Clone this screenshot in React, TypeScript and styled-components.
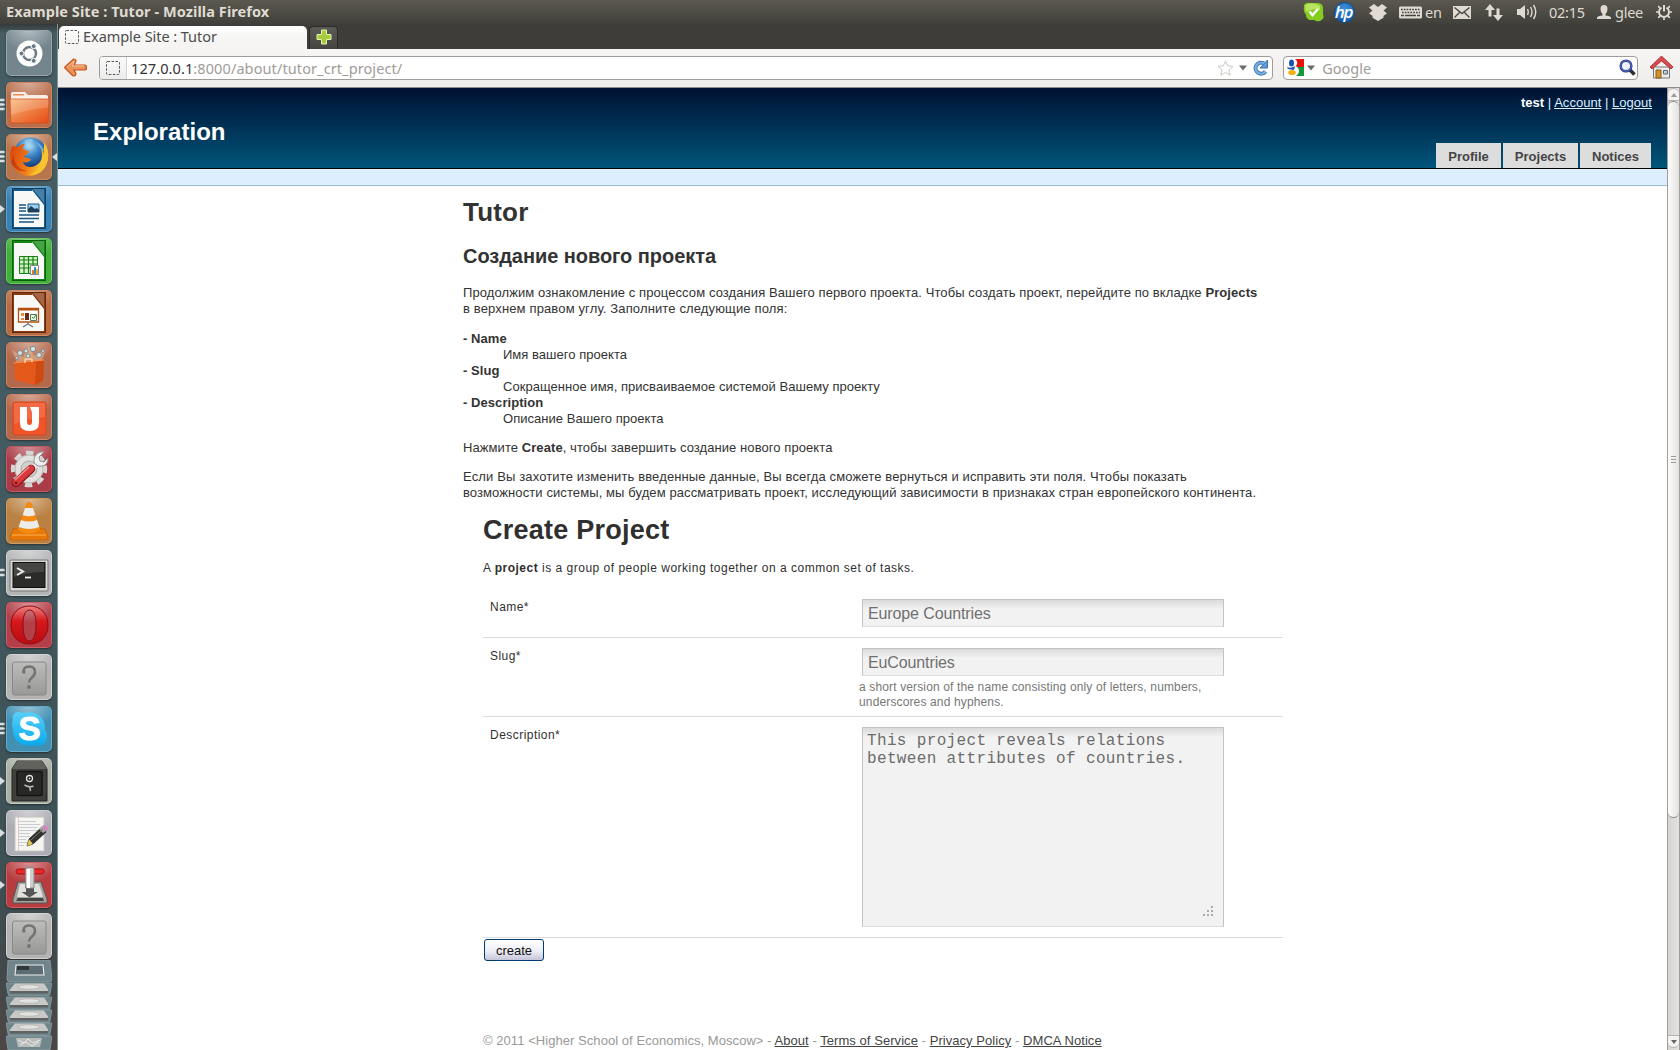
import React from "react";
import styled, { createGlobalStyle } from "styled-components";

const ui = '"Noto Sans", "Open Sans", sans-serif';
const sans = '"Liberation Sans", Arial, sans-serif';

const Global = createGlobalStyle`
  * { box-sizing: border-box; }
  body { margin: 0; background: #fff; overflow: hidden; }
  svg { display: block; flex: none; }
`;

const Screen = styled.div`
  width: 1680px; height: 1050px; display: flex; flex-direction: column;
  font-family: ${sans}; overflow: hidden;
`;
const Panel = styled.header`
  height: 24px; flex: none; display: flex; align-items: center; justify-content: space-between;
  padding: 0 8px 0 6px; background: linear-gradient(#5b594f, #403f3a);
  color: #dfdbd2; font-family: ${ui}; font-size: 14.5px;
`;
const WindowTitle = styled.span`
  font-weight: 700; font-size: 14.5px; letter-spacing: 0.08px; white-space: nowrap; line-height: 23px; height: 24px;
`;
const Tray = styled.div`display: flex; align-items: center; height: 24px;`;
const TrayItem = styled.span<{ $w: number; $gap?: number }>`
  width: ${p => p.$w}px; margin-left: ${p => p.$gap ?? 0}px; white-space: nowrap; line-height: 22px;
  display: flex; justify-content: flex-start; letter-spacing: -0.25px;
`;
const Desktop = styled.div`display: flex; flex: 1; min-height: 0;`;

const Launcher = styled.nav`
  width: 58px; flex: none; padding: 6px 0 0 0; display: flex; flex-direction: column;
  border-right: 1px solid #7d9795;
  background: linear-gradient(#34393a 0, #465d63 9px, #435a60 45%, #3d5156 80%, #43494a 92%, #4c4645 100%);
`;
const Slot = styled.div<{ $h: number }>`
  height: ${p => p.$h}px; flex: none; display: flex; align-items: flex-start;
`;
const Pips = styled.div`width: 6px; height: 46px; display: flex; align-items: center;`;
const ActiveMark = styled.div`width: 5px; height: 46px; display: flex; align-items: center;`;
const Tile = styled.div<{ $c: string; $edge: string }>`
  width: 46px; height: 46px; border-radius: 5px;
  background: radial-gradient(ellipse 60% 45% at 50% 0, rgba(255,255,255,.45), rgba(255,255,255,0)), ${p => p.$c};
  box-shadow: inset 0 0 0 1px ${p => p.$edge}, 0 1px 2px rgba(0,0,0,.45);
`;
const Stack = styled.div`height: 90px; padding-left: 6px;`;

const Browser = styled.main`flex: 1; min-width: 0; display: flex; flex-direction: column;`;
const TabStrip = styled.div`
  height: 25px; flex: none; display: flex; align-items: flex-end; gap: 2px; padding-left: 1px; background: #3e3d39;
`;
const Tab = styled.div`
  width: 248px; height: 23px; display: flex; align-items: center; gap: 4px; padding: 0 0 2px 6px;
  border-radius: 5px 5px 0 0; background: linear-gradient(#fff, #f6f5f4 60%);
  font: 14.5px/21px ${ui}; letter-spacing: -0.05px; color: #4c4c4c;
`;
const NewTab = styled.div`
  width: 29px; height: 23px; display: flex; align-items: center; justify-content: center; padding-bottom: 2px;
  border: 1px solid #2c2b28; border-bottom: 0; border-radius: 4px 4px 0 0; background: linear-gradient(#5c5a55, #45443f);
`;
const Toolbar = styled.div`
  height: 39px; flex: none; display: flex; align-items: center; padding: 0 7px 1px 6px;
  background: linear-gradient(#f6f5f4, #eeedeb); border-bottom: 1px solid #8f8d8a;
`;
const Field = styled.div<{ $w: number; $ml: number }>`
  width: ${p => p.$w}px; margin-left: ${p => p.$ml}px; height: 24px; display: flex; align-items: center;
  border: 1px solid #a09d99; border-radius: 4px; background: #fff; overflow: hidden;
  font: 14.5px/22px ${ui}; color: #a09c98;
`;
const SiteId = styled.div`
  width: 27px; height: 22px; display: flex; align-items: center; justify-content: center;
  background: linear-gradient(#fafafa, #ececec); border-right: 1px solid #d4d2cf;
`;
const Url = styled.span`flex: 1; padding-left: 4px; letter-spacing: 0.1px; b { font-weight: 400; color: #333; }`;
const Placeholder = styled.span`flex: 1; padding-left: 7px;`;

const View = styled.div`flex: 1; min-height: 0; display: flex;`;
const Page = styled.div`width: 1609px; flex: none; display: flex; flex-direction: column; background: #fff; color: #333; overflow: hidden;`;
const SiteHeader = styled.div`
  height: 81px; flex: none; display: flex; justify-content: space-between; padding: 0 15px 0 35px;
  background: linear-gradient(#001133, #00557a); border-bottom: 1px solid #000;
`;
const SiteName = styled.div`padding-top: 30px; font: 700 24px/28px ${sans}; letter-spacing: 0.05px; color: #fff;`;
const HeaderSide = styled.div`display: flex; flex-direction: column; justify-content: space-between; align-items: flex-end;`;
const UserLinks = styled.div`
  padding-top: 7px; font-size: 13px; line-height: 16px; color: #def; letter-spacing: 0.03px;
  b { color: #fff; } a { text-decoration: underline; }
`;
const SiteTabs = styled.div`display: flex; gap: 2px; padding-right: 1px;`;
const SiteTab = styled.a<{ $w: number }>`
  width: ${p => p.$w}px; height: 25px; background: #ddd; color: #444; text-align: center; font: 700 13px/27px ${sans};
`;
const SubBar = styled.div`height: 17px; flex: none; background: #def; border-bottom: 1px solid #9bc;`;
const Article = styled.article`margin-left: 405px; width: 800px; font-size: 13px; line-height: 16px;`;
const H1 = styled.h1`margin: 11px 0 0; font-size: 26px; line-height: 30px; letter-spacing: 0.2px;`;
const H2 = styled.h2`margin: 17px 0 0; font-size: 20px; line-height: 24px; letter-spacing: -0.05px;`;
const P = styled.p<{ $top: number }>`margin: ${p => p.$top}px 0 0; white-space: nowrap;`;
const Line = styled.span<{ $ls: number }>`display: block; letter-spacing: ${p => p.$ls}px;`;
const Dl = styled.dl`margin: 14px 0 0; dt { font-weight: 700; letter-spacing: 0.06px; } dd { margin: 0 0 0 40px; letter-spacing: 0.03px; }`;

const Form = styled.form`margin: 0 0 0 425px; width: 800px; font-size: 12px; color: #2f2f2f;`;
const FormTitle = styled.h1`margin: 13px 0 0; font-size: 27px; line-height: 32px; letter-spacing: 0.24px;`;
const Lead = styled.p`margin: 14px 0 13px; font-size: 12px; line-height: 16px; letter-spacing: 0.5px; white-space: nowrap;`;
const Row = styled.div<{ $h: number }>`
  height: ${p => p.$h}px; display: flex; border-bottom: 1px solid #dcdcdc; padding: 10px 0 0 7px;
`;
const Label = styled.label`width: 370px; line-height: 16px; letter-spacing: 0.46px;`;
const Cell = styled.div`position: relative; padding-left: 2px; width: 370px;`;
const Input = styled.input`
  display: block; width: 362px; height: 28px; padding: 1px 5px 0; outline: 0;
  border: 1px solid #c3c3c3; border-bottom-color: #ddd; border-radius: 0;
  background: linear-gradient(#dadada, #f2f2f2 9px); color: #707070; font: 16px ${sans}; letter-spacing: -0.12px;
`;
const Textarea = styled.textarea`
  display: block; width: 362px; height: 200px; padding: 4px 4px; outline: 0; resize: none; overflow: hidden;
  border: 1px solid #c3c3c3; border-bottom-color: #ddd; border-radius: 0;
  background: linear-gradient(#dadada, #f2f2f2 9px); color: #6c6c6c;
  font: 16px/18px "Liberation Mono", monospace; letter-spacing: 0.35px;
`;
const Help = styled.div`margin: 4px 0 0 -3px; font-size: 12px; line-height: 15px; color: #777; letter-spacing: 0.14px; white-space: nowrap;`;
const Grip = styled.svg`position: absolute; left: 343px; bottom: 20px;`;
const Submit = styled.button`
  display: block; margin: 1px 0 0 1px; width: 60px; height: 22px; padding: 0; border: 1px solid #003c74; border-radius: 3px;
  background: linear-gradient(#fff, #eeeef6 55%, #c6c5d9); font: 13px ${sans}; color: #111;
`;
const Footer = styled.footer`
  margin: 72px 0 0 425px; font-size: 13px; line-height: 16px; color: #999; white-space: nowrap; letter-spacing: 0.055px;
  a { color: #444; text-decoration: underline; }
`;
const ScrollBar = styled.div`
  width: 13px; height: 100%; display: flex; flex-direction: column; background: linear-gradient(90deg, #d8d4d0, #e3e2e0);
  border: solid #a09d9a; border-width: 0 1px; padding-bottom: 2px;
`;
const ScrollEnd = styled.div<{ $bottom?: boolean }>`
  height: 13px; flex: none; display: flex; align-items: center; justify-content: center; background: #f3f2f1;
  border: 1px solid #b5b2ae; border-radius: ${p => (p.$bottom ? "0 0 6px 6px" : "6px 6px 0 0")}; border-left: 0; border-right: 0;
`;
const Thumb = styled.div`
  height: 717px; flex: none; display: flex; align-items: center; justify-content: center;
  border: solid #8f8c88; border-width: 1px 0; border-radius: 6px; background: linear-gradient(90deg, #fdfdfc, #e3e1de);
`;
const Spacer = styled.div`flex: 1;`;

const DashedPage = () => (
  <svg width="14" height="14" viewBox="0 0 14 14"><rect x=".5" y=".5" width="13" height="13" rx="1" fill="none" stroke="#555" strokeDasharray="2.5 1.5" /></svg>
);
const Caret = () => <svg width="8" height="6" viewBox="0 0 8 6"><path d="M0 .5h8L4 5.5z" fill="#6d6b68" /></svg>;

const Files = () => (
  <svg width="46" height="46" viewBox="0 0 46 46">
    <defs><linearGradient id="fold" x1="0" y1="0" x2="1" y2="1"><stop offset="0" stopColor="#f6bd83" /><stop offset=".5" stopColor="#ee7f43" /><stop offset="1" stopColor="#e64a16" /></linearGradient></defs>
    <path d="M5 12q0-2 2-2h12l3 3h18q2 0 2 2v4H5z" fill="#f8eee8" /><path d="M7 12h11v1.500H7z" fill="#f08a54" />
    <path d="M4 17h39l-1 24H5z" fill="url(#fold)" stroke="#dd4a14" strokeWidth=".7" />
    <path d="M4.500 17.500h38l-.4 8Q22 27 5 33z" fill="#fff" opacity=".16" />
  </svg>
);
const Firefox = () => (
  <svg width="46" height="46" viewBox="0 0 46 46">
    <defs>
      <radialGradient id="globe" cx=".45" cy=".25" r=".7"><stop offset="0" stopColor="#b4e0f6" /><stop offset=".45" stopColor="#3c86c8" /><stop offset="1" stopColor="#0d2d6c" /></radialGradient>
      <linearGradient id="fox" x1="0" y1="0" x2="1" y2=".3"><stop offset="0" stopColor="#d9420b" /><stop offset=".6" stopColor="#f07c16" /><stop offset="1" stopColor="#fcd438" /></linearGradient>
    </defs>
    <circle cx="24.500" cy="20" r="16.500" fill="url(#globe)" />
    <path d="M19 6q5-2 8 0l-3 4 5 2-5 3-5-3zM30 8q7 3 9 10l-4-3z" fill="#9bd2ee" opacity=".55" />
    <path d="M6.500 12C2 20 4 32 12 38c9 7 22 4 27-5 4-7 4-14 1-20 0 4 0 6-2 9 0-4-1-6-3-8 2 7 1 13-3 16-6 5-14 3-15-2 3 1 5 0 8-2-2-3-5-2-7-3 0-2 4-2 5-6-2 0-4-1-6-2 0-3 1-4 2-5-4 0-5 1-7 3-2 0-3-1-5-1z" fill="url(#fox)" />
    <path d="M38 8c5 7 6 16 1 25-3 5-9 8-16 8 10-4 15-10 15-18z" fill="#f9c32e" />
    <path d="M8 20c-1 9 5 16 13 17-6 1-14-2-16-9z" fill="#b92c08" opacity=".6" />
  </svg>
);
const OfficeDoc = ({ c, children }: { c: string; children: React.ReactNode }) => (
  <svg width="46" height="46" viewBox="0 0 46 46">
    <path d="M6 2h34v41H6z" fill={c} /><path d="M6.500 2.500h33v40h-33z" fill="none" stroke="#000" strokeOpacity=".3" />
    <path d="M8 5h18l12 14v22H8z" fill="#f8f8f7" /><path d="M26 4v2L37 19v-1z" fill="#fff" />
    <path d="M27 3h11v14z" fill="#fff" opacity=".22" />{children}
  </svg>
);
const Writer = () => <OfficeDoc c="#145a8c"><path d="M13 19h7M13 22h7M13 25h7M13 29h20M13 32.500h20M13 36h15" stroke="#155684" strokeWidth="1.700" /><path d="M22 18h11v8H22z" fill="#9ad0ee" stroke="#155684" /><path d="M22 26v-3l3-3 4 3 2-1 2 2v2z" fill="#1d4159" /></OfficeDoc>;
const Calc = () => <OfficeDoc c="#128a12"><path d="M13.500 18.500h18v17h-18z" fill="#d5f1c7" stroke="#138013" /><path d="M13 22h19M13 26h19M13 30h19M18 18v18M22.500 18v18M27 18v18" stroke="#138013" strokeWidth="1.200" /><path d="M24.500 27.500h8v9h-8z" fill="#fff" stroke="#888" /><path d="M26 32h2v4h-2z" fill="#e8792c" /><path d="M28 29h2v7h-2z" fill="#318fd0" /><path d="M30 31h2v5h-2z" fill="#f0b62e" /></OfficeDoc>;
const Impress = () => <OfficeDoc c="#8c3a10"><path d="M12.500 18.500h20v13.500h-20z" fill="#fff" stroke="#b5500f" strokeWidth="1.300" /><path d="M12 18h21v2.500H12z" fill="#b5500f" /><path d="M15 23h3v3h-3zM15 28h3v2h-3z" fill="#e58845" /><path d="M19 23h4v7h-4z" fill="#6d2c10" /><path d="M24.500 24.500h6v6h-6z" fill="#eaf7e5" stroke="#547b58" /><path d="m26 27 1.500 1.500L30 25" fill="none" stroke="#20963a" /><path d="M22 32v2m0 0-5 3m5-3 5 3" fill="none" stroke="#777" strokeWidth="1.400" /></OfficeDoc>;
const Software = () => (
  <svg width="46" height="46" viewBox="0 0 46 46">
    <path d="M11 21 6 8l11 7L23 5l5 9L40 7l-5 14z" fill="#fbd5a4" opacity=".4" />
    {[[14, 11, 2.500], [20, 9, 2], [27, 7, 2.700], [33, 13, 2.500], [22, 14, 2], [37, 9, 1.500], [11, 16, 1.500]].map(([x, y, r]) => <circle key={x} cx={x} cy={y} r={r} fill="#dce1e3" stroke="#71858d" strokeWidth=".9" />)}
    <path d="M8 21q14-2 30-3l-1 21-8 4-20-5z" fill="#e4591a" /><path d="m30 20 8-2-1 21-8 4z" fill="#cf4a10" />
    <path d="M8 21q14-2 30-3" fill="none" stroke="#f99150" /><path d="M19 21v-3q0-1 1-1h5q1 0 1 1v2" fill="none" stroke="#ffd1a0" strokeWidth="1.500" />
  </svg>
);
const UbuntuOne = () => (
  <svg width="46" height="46" viewBox="0 0 46 46"><rect x="7" y="8" width="33" height="33" rx="2" fill="#f0552a" stroke="#d9461d" /><path d="M8 9h31v14Q22 24 8 30z" fill="#fff" opacity=".13" />
    <path d="M14 13h7v15q0 3 2.500 3t2.500-3V18l-2-5h9v16q0 8-9.500 8T14 29z" fill="#fff" /></svg>
);
const Settings = () => (
  <svg width="46" height="46" viewBox="0 0 46 46">
    <circle cx="23" cy="23" r="15.500" fill="none" stroke="#d5d5d3" strokeWidth="5.500" strokeDasharray="7 5.170" transform="rotate(-12 23 23)" />
    <circle cx="23" cy="23" r="14" fill="#e1e1df" stroke="#b9b9b7" /><circle cx="23" cy="23" r="8" fill="#cfcfcd" stroke="#aaa" />
    <path d="m31 18-7 7" stroke="#e8e8e8" strokeWidth="5" /><path d="M28 17c-1-7 4-12 10-11l-5 5 1 4 4 1 4-4c0 7-5 9-10 8z" fill="#ededeb" stroke="#909090" />
    <path d="M25 23 10 37" stroke="#8b1218" strokeWidth="8.500" strokeLinecap="round" /><path d="M25 22.500 10 36.500" stroke="#d6383b" strokeWidth="6.500" strokeLinecap="round" /><path d="M23 21 9 34" stroke="#f19b98" strokeWidth="1.200" /><circle cx="10" cy="37" r="1.300" fill="#701014" />
  </svg>
);
const Vlc = () => (
  <svg width="46" height="46" viewBox="0 0 46 46">
    <path d="M7 31h32l3 8q0 3-3 3H7q-3 0-3-3z" fill="#e87909" stroke="#c75e00" strokeWidth=".8" /><path d="M6 37h34" stroke="#ffb04c" />
    <path d="M20.500 5q2.500-2 5 0l9 27q-11 7-23 0z" fill="#f38a12" /><path d="M19 10h8l2.300 7q-6 2.500-12.600 0zM15 22q8 3 16 0l2.300 7q-10 4-20.600 0z" fill="#ececea" />
  </svg>
);
const Terminal = () => (
  <svg width="46" height="46" viewBox="0 0 46 46"><rect x="4" y="10" width="38" height="31" rx="1" fill="#d6d6d4" stroke="#777" /><rect x="7" y="12.500" width="32" height="25" fill="#2b2b2a" stroke="#111" /><path d="M8 13h30v9Q22 22 8 27z" fill="#fff" opacity=".13" /><path d="m11 18 6 3.500-6 3.500" fill="none" stroke="#eee" strokeWidth="2" /><path d="M19 27.500h6" stroke="#eee" strokeWidth="1.800" /></svg>
);
const Opera = () => (
  <svg width="46" height="46" viewBox="0 0 46 46"><defs><linearGradient id="op" x1="0" y1="0" x2="0" y2="1"><stop offset="0" stopColor="#ee8583" /><stop offset=".4" stopColor="#d5181c" /><stop offset="1" stopColor="#b80d12" /></linearGradient></defs>
    <path fillRule="evenodd" d="M23.500 4C35 4 42 12 42 23s-7 19-18.500 19S5 34 5 23 12 4 23.500 4zm0 4C19 8 17 14 17 23s2 16 6.500 16S30 32 30 23 28 8 23.500 8z" fill="url(#op)" stroke="#8f0c11" /></svg>
);
const Unknown = () => (
  <svg width="46" height="46" viewBox="0 0 46 46"><defs><linearGradient id="uk" x1="0" y1="0" x2="0" y2="1"><stop offset="0" stopColor="#bdbdbc" /><stop offset="1" stopColor="#989897" /></linearGradient></defs>
    <rect x="6.500" y="8" width="33.500" height="33" rx="2" fill="url(#uk)" stroke="#888887" />
    <path d="M17.500 18q0-5.500 5.500-5.500 6 0 6 5.500 0 3-3 5.500t-3 5" fill="none" stroke="#737372" strokeWidth="2.500" /><circle cx="17.800" cy="18" r="1.800" fill="#737372" /><circle cx="23" cy="33" r="1.900" fill="#737372" /></svg>
);
const SkypeGlyph = styled.span`
  width: 46px; height: 46px; display: flex; align-items: center; justify-content: center; position: relative;
  color: #fff; font: 700 33px/46px "Liberation Sans", Arial, sans-serif; -webkit-text-stroke: 1px #fff; padding-left: 1px;
  svg { position: absolute; inset: 0; } span { position: relative; }
`;
const Skype = () => <SkypeGlyph><svg width="46" height="46" viewBox="0 0 46 46"><defs><linearGradient id="sk" x1="0" y1="0" x2="0" y2="1"><stop offset="0" stopColor="#57d0f9" /><stop offset="1" stopColor="#0aa8ec" /></linearGradient></defs><path d="M7 14C5 8 11 4 17 7c12-3 23 4 22 17 6 9-2 19-11 15C17 42 6 35 7 23q-2-5 0-9z" fill="url(#sk)" /></svg><span>S</span></SkypeGlyph>;
const Safe = () => (
  <svg width="46" height="46" viewBox="0 0 46 46"><path d="M11 3h25l5 8v32H6V11z" fill="#3f3f3c" stroke="#222" /><path d="M11 3h25l5 8H6z" fill="#62625d" /><rect x="11" y="13.500" width="25" height="24" rx="1" fill="#282826" stroke="#141413" strokeWidth="1.500" /><circle cx="23.500" cy="20.500" r="3" fill="#111" stroke="#e5e5e0" strokeWidth="1.300" /><circle cx="23.500" cy="20.500" r="1" fill="#ddd" /><path d="M18.500 27q5 3 9 1m-4 0 1 5" stroke="#b5b5b0" strokeWidth="1.500" fill="none" /></svg>
);
const Editor = () => (
  <svg width="46" height="46" viewBox="0 0 46 46"><path d="M9 7h29v34H9z" fill="#f5f5f1" stroke="#c5c5c0" /><path d="M12 11.500h18M12 14.500h22M12 17.500h19M12 20.500h22M12 23.500h12M12 26.500h12M12 29.500h8M12 32.500h10M12 35.500h6" stroke="#c9ccd3" /><path d="M12.500 7v34" stroke="#efb3b3" strokeWidth=".7" />
    <path d="m21 36 2-7 13-12 4 5-13 12z" fill="#30302e" stroke="#151514" strokeWidth=".7" /><path d="m21 36 2-7 4 5z" fill="#e8c551" /><path d="m33 19 3-3 4 5-3 2z" fill="#a5a5a0" /><path d="m36 16 2-1q4 1 4 5l-2 1z" fill="#d980c8" /><path d="m25 30 12-11" stroke="#777" /></svg>
);
const Transmission = () => (
  <svg width="46" height="46" viewBox="0 0 46 46"><rect x="10" y="7" width="28" height="5" rx="2.500" fill="#eb292b" stroke="#a70d11" /><path d="M12 20h23l6 17v4H7v-4z" fill="#a4a4a1" stroke="#555" /><path d="M14 22h19l4 13H11z" fill="#e1e1dd" /><path d="M12 36h25l1 3H10z" fill="#444" />
    <path d="M20 30v-5h8v5h4l-8.500 5.500L15.500 30z" fill="#555" /><path d="M19.500 7q0-1.500 4.500-1.500T28 7v19h-8.500z" fill="#cfcfcc" stroke="#888" /><path d="M21 7h3v19h-3z" fill="#fff" /></svg>
);
const Dash = () => (
  <svg width="46" height="46" viewBox="0 0 46 46"><circle cx="23.500" cy="23.500" r="13" fill="#fff" /><circle cx="23.500" cy="23.500" r="6.500" fill="none" stroke="#6d7c84" strokeWidth="2.500" />
    {[[15.500, 23.500], [27.700, 16.200], [27.700, 30.800]].map(([x, y]) => <circle key={y} cx={x} cy={y} r="2.500" fill="#6d7c84" stroke="#fff" strokeWidth="1" />)}</svg>
);

type Entry = { c: string; edge: string; icon: React.ReactNode; pips?: "three" | "two" | "one"; active?: boolean; h?: number };
const entries: Entry[] = [
  { c: "#74868d", edge: "#98a6ab", icon: <Dash /> },
  { c: "#b96e4b", edge: "#cf8462", icon: <Files />, pips: "three" },
  { c: "#b8764e", edge: "#c98a60", icon: <Firefox />, pips: "three", active: true },
  { c: "#3981b2", edge: "#62a0cb", icon: <Writer />, pips: "one" },
  { c: "#43ae3b", edge: "#6dca61", icon: <Calc /> },
  { c: "#b76c43", edge: "#d28a64", icon: <Impress /> },
  { c: "#b2694c", edge: "#c9846a", icon: <Software /> },
  { c: "#b5674a", edge: "#cc866c", icon: <UbuntuOne /> },
  { c: "#aa3c47", edge: "#c25a63", icon: <Settings /> },
  { c: "#b98243", edge: "#d19b5e", icon: <Vlc /> },
  { c: "#b3b4b5", edge: "#d0d1d1", icon: <Terminal />, pips: "two" },
  { c: "#b33f48", edge: "#cb5d65", icon: <Opera /> },
  { c: "#b3b3b3", edge: "#d2d2d2", icon: <Unknown /> },
  { c: "#4291b4", edge: "#65aac9", icon: <Skype />, pips: "three" },
  { c: "#a8afa4", edge: "#c4cac0", icon: <Safe />, pips: "one" },
  { c: "#adadb5", edge: "#cacad0", icon: <Editor />, pips: "one" },
  { c: "#b73c3f", edge: "#d06062", icon: <Transmission />, pips: "one", h: 51 },
  { c: "#b3b3b3", edge: "#d2d2d2", icon: <Unknown />, h: 47 },
];

const PipMarks = ({ kind }: { kind?: Entry["pips"] }) => (
  <Pips>
    <svg width="6" height="14" viewBox="0 0 6 14" fill="#d9dedf">
      {kind === "three" && <path d="M0 1h3.500l1.500 1-1.500 1H0zM0 5.500h3.500l1.500 1-1.500 1H0zM0 10h3.500l1.500 1-1.500 1H0z" stroke="#d9dedf" strokeWidth=".5" />}
      {kind === "two" && <path d="M0 3h3.500l1.500 1-1.500 1H0zM0 8h3.500l1.500 1-1.500 1H0z" stroke="#d9dedf" strokeWidth=".5" />}
      {kind === "one" && <path d="M0 3v8l5-4z" />}
    </svg>
  </Pips>
);

const FoldedStack = () => (
  <svg width="46" height="90" viewBox="0 0 46 90">
    <path d="M2 0h42l2 19q0 3-3 3H4q-3 0-3-3z" fill="#6f848b" stroke="#8fa1a6" strokeWidth=".8" /><path d="M10 5h27l1 10H9z" fill="#5c6c73" stroke="#eee" strokeWidth="1.100" /><path d="M11 6h12v4H11z" fill="#30383b" />
    {[22, 36, 49, 62].map(y => (
      <g key={y} transform={`translate(0 ${y})`}><path d="M0 1h46l-2 11q0 2-2 2H4q-2 0-2-2z" fill="#70868d" stroke="#90a3a8" strokeWidth=".7" /><path d="M9 1.500h29l4 6v2H4v-2z" fill="#c9c9c7" /><path d="M4 9h38v2.500H4z" fill="#5f6263" /><ellipse cx="23" cy="5" rx="11" ry="2.200" fill="#e2e2e0" stroke="#aaa" strokeWidth=".6" /></g>
    ))}
    <path d="M0 76h46l-2 14H2z" fill="#71878e" stroke="#90a3a8" strokeWidth=".7" /><path d="M10 78h26l-2 9H12z" fill="#b8bdbb" /><path d="m12 80 6 3 4-4 5 4 7-3M14 85l6-3 6 4 7-4" stroke="#e8eae7" fill="none" />
  </svg>
);

const SkypeTray = () => <svg width="21" height="20" viewBox="0 0 21 20"><path d="M1 5C0 2 4 0 7 1h9q4 1 4 5v6q2 5-3 7-3 1-6-1H7q-4-1-4-5Q0 9 1 5z" fill="#86cb20" /><path d="M2 3q8-4 15 1v4Q9 6 3 10z" fill="#d0ef80" opacity=".7" /><path d="m6.500 9.500 3 3.500 5.500-6" fill="none" stroke="#fff" strokeWidth="2.500" /></svg>;
const HpGlyph = styled.span`
  width: 21px; height: 21px; border-radius: 50%; display: flex; align-items: center; justify-content: center;
  background: radial-gradient(circle at 50% 30%, #3d93da, #0a4e9e); color: #fff; border: 1px solid #0a4a92;
  font: italic 600 17px/17px "Open Sans", sans-serif; letter-spacing: -1.2px; padding: 0 2px 2px 0;
`;
const Dropbox = () => <svg width="18" height="17" viewBox="0 0 18 17" fill="#dfdbd2"><path d="M5 0 0 3.500 3.500 6.500 0 9.500l3.500 2.300v2L9 17l5.500-3.200v-2L18 9.500l-3.500-3L18 3.500 13 0 9 3z" /></svg>;
const Keyboard = () => <svg width="24" height="13" viewBox="0 0 24 13"><rect x="0" y=".5" width="23" height="12" rx="1.500" fill="#dfdbd2" /><path d="M2 3.500h19M3 6.500h18" stroke="#45443f" strokeWidth="1.500" strokeDasharray="1.700 1.100" /><path d="M2 9.500h3m1 0h11m1 0h3" stroke="#45443f" strokeWidth="1.300" /></svg>;
const Mail = () => <svg width="18" height="13" viewBox="0 0 18 13"><path d="M0 0h18v13H0z" fill="#dfdbd2" /><path d="m1.500 1.500 7.500 6 7.500-6M1.500 11.500l5-5m10 5-5-5" fill="none" stroke="#484742" strokeWidth="1.400" /></svg>;
const Network = () => <svg width="18" height="17" viewBox="0 0 18 17" fill="#dfdbd2"><path d="M5 0 0 6h3.500v6.500h3V6H10zM13 17 8 11h3.500V4.500h3V11H18z" /></svg>;
const Sound = () => <svg width="20" height="16" viewBox="0 0 20 16"><path d="M0 5h3l5-4v14l-5-4H0z" fill="#dfdbd2" /><path d="M10.500 5q1.500 3 0 6M13.500 3q3 5 0 10M16.500 1q4.500 7 0 14" fill="none" stroke="#dfdbd2" strokeWidth="1.400" /></svg>;
const Person = () => <svg width="14" height="15" viewBox="0 0 14 15"><path d="M7 0q3.500 0 3.500 4 0 3-2 5v1.500q4.500.5 5.500 2V14H0v-1.500q1-1.500 5.500-2V9q-2-2-2-5Q3.500 0 7 0z" fill="#dfdbd2" /></svg>;
const Power = () => <svg width="16" height="16" viewBox="0 0 16 16" fill="none" stroke="#dfdbd2"><path d="M5.500 3.600a5 5 0 1 0 5 0" strokeWidth="1.900" /><path d="M8 1v6.500" strokeWidth="2" /><path d="m3.800 3.800-1.600-1.600m10 1.600 1.600-1.600M2.700 8H0m16 0h-2.700M4.200 11.800l-2 2m9.600-2 2 2M8 16v-2.500" strokeWidth="1.700" /></svg>;

const BackArrow = () => <svg width="23" height="19" viewBox="0 0 23 19"><path d="M9.500 1Q12 1 12 3L10 7h11q1.500 0 1.500 2.500T21 12H10l2 3.500Q11 19 8.500 17.500L1 10q-.5-.5 0-1z" fill="#e8935a" stroke="#c8511a" strokeWidth="1.200" /><path d="m3 9 7-6-1.500 5H20" fill="none" stroke="#f7c59c" /></svg>;
const Star = () => <svg width="17" height="16" viewBox="0 0 17 16"><path d="m8.500 1 2.200 4.800 5.300.6-4 3.600 1.200 5.200-4.700-2.700-4.700 2.700L5 10 1 6.400l5.300-.6z" fill="#fff" stroke="#c9c7c5" /></svg>;
const Reload = () => <svg width="16" height="16" viewBox="0 0 16 16"><path d="M12.500 11.500A5.500 5.500 0 1 1 11 3.500" fill="none" stroke="#3973b1" strokeWidth="4" /><path d="M14.500 0v8H7z" fill="#5f9bd5" stroke="#3973b1" /><path d="M12.500 11.500A5.500 5.500 0 1 1 11 3.500" fill="none" stroke="#78afe0" strokeWidth="2.300" /></svg>;
const GoogleFav = () => <svg width="17" height="17" viewBox="0 0 17 17"><path d="M8 0h9v8H8z" fill="#e8110b" /><path d="M8 8h9v9H8z" fill="#109a3c" /><path d="M0 0h8v17H0z" fill="#fff" /><path d="M8 0q4 3 1 7l2 2q3 4-2 8H7V0z" fill="#fff" /><ellipse cx="4.500" cy="4" rx="2.500" ry="3.500" fill="#1953ae" /><path d="M0 8q4 2 8-1l-1 4-6-1z" fill="#1953ae" /><ellipse cx="5" cy="13.500" rx="3.800" ry="2.600" fill="#f5b216" /></svg>;
const Magnifier = () => <svg width="17" height="17" viewBox="0 0 17 17"><path d="m11 11 4.500 4.500" stroke="#2c2c35" strokeWidth="3.500" /><circle cx="7" cy="7" r="5.300" fill="#edf3fc" stroke="#25398c" strokeWidth="2.500" /><circle cx="7" cy="7" r="5.300" fill="none" stroke="#7b8dce" strokeWidth=".7" /></svg>;
const Home = () => <svg width="23" height="23" viewBox="0 0 23 23"><path d="M3.500 11h16v11h-16z" fill="#eeeceb" stroke="#777" /><path d="M6 14h5v8H6z" fill="#d29128" stroke="#895b14" /><path d="M13.500 14.500h4v3.500h-4z" fill="#bed2df" stroke="#59656c" /><path d="M11.500 0 0 11l2 2 9.500-8 9.500 8 2-2z" fill="#d94b4e" stroke="#9e2529" strokeWidth=".8" /></svg>;

export default function App() {
  return (
    <Screen>
      <Global />
      <Panel>
        <WindowTitle>Example Site : Tutor - Mozilla Firefox</WindowTitle>
        <Tray>
          <TrayItem $w={21}><SkypeTray /></TrayItem>
          <TrayItem $w={21} $gap={10}><HpGlyph>hp</HpGlyph></TrayItem>
          <TrayItem $w={18} $gap={14}><Dropbox /></TrayItem>
          <TrayItem $w={24} $gap={12}><Keyboard /></TrayItem>
          <TrayItem $w={16} $gap={2}>en</TrayItem>
          <TrayItem $w={18} $gap={12}><Mail /></TrayItem>
          <TrayItem $w={18} $gap={14}><Network /></TrayItem>
          <TrayItem $w={20} $gap={14}><Sound /></TrayItem>
          <TrayItem $w={37} $gap={12}>02:15</TrayItem>
          <TrayItem $w={14} $gap={11}><Person /></TrayItem>
          <TrayItem $w={28} $gap={4}>glee</TrayItem>
          <TrayItem $w={16} $gap={13}><Power /></TrayItem>
        </Tray>
      </Panel>
      <Desktop>
        <Launcher>
          {entries.map((e, i) => (
            <Slot key={i} $h={e.h ?? 52}>
              <PipMarks kind={e.pips} />
              <Tile $c={e.c} $edge={e.edge}>{e.icon}</Tile>
              {e.active && <ActiveMark><svg width="5" height="8" viewBox="0 0 5 8"><path d="M5 0v8L0 4z" fill="#d9dedf" /></svg></ActiveMark>}
            </Slot>
          ))}
          <Stack><FoldedStack /></Stack>
        </Launcher>
        <Browser>
          <TabStrip>
            <Tab><DashedPage />Example Site : Tutor</Tab>
            <NewTab><svg width="16" height="16" viewBox="0 0 16 16"><path d="M5.500 1h5v4.500H15v5h-4.500V15h-5v-4.500H1v-5h4.500z" fill="#a4cc3c" stroke="#e6f2b4" /></svg></NewTab>
          </TabStrip>
          <Toolbar>
            <BackArrow />
            <Field $w={1175} $ml={12}>
              <SiteId><DashedPage /></SiteId>
              <Url><b>127.0.0.1</b>:8000/about/tutor_crt_project/</Url>
              <Star />
              <TrayItem $w={8} $gap={5}><Caret /></TrayItem>
              <TrayItem $w={19} $gap={6}><Reload /></TrayItem>
            </Field>
            <Field $w={355} $ml={10}>
              <TrayItem $w={17} $gap={3}><GoogleFav /></TrayItem>
              <TrayItem $w={8} $gap={3}><Caret /></TrayItem>
              <Placeholder>Google</Placeholder>
              <TrayItem $w={18}><Magnifier /></TrayItem>
            </Field>
            <TrayItem $w={23} $gap={12}><Home /></TrayItem>
          </Toolbar>
          <View>
            <Page>
              <SiteHeader>
                <SiteName>Exploration</SiteName>
                <HeaderSide>
                  <UserLinks><b>test</b> | <a>Account</a> | <a>Logout</a></UserLinks>
                  <SiteTabs>
                    <SiteTab $w={65}>Profile</SiteTab>
                    <SiteTab $w={75}>Projects</SiteTab>
                    <SiteTab $w={71}>Notices</SiteTab>
                  </SiteTabs>
                </HeaderSide>
              </SiteHeader>
              <SubBar />
              <Article>
                <H1>Tutor</H1>
                <H2>Создание нового проекта</H2>
                <P $top={17}>
                  <Line $ls={0.09}>Продолжим ознакомление с процессом создания Вашего первого проекта. Чтобы создать проект, перейдите по вкладке <b>Projects</b></Line>
                  <Line $ls={0.14}>в верхнем правом углу. Заполните следующие поля:</Line>
                </P>
                <Dl>
                  <dt>- Name</dt><dd>Имя вашего проекта</dd>
                  <dt>- Slug</dt><dd>Сокращенное имя, присваиваемое системой Вашему проекту</dd>
                  <dt>- Description</dt><dd>Описание Вашего проекта</dd>
                </Dl>
                <P $top={13}><Line $ls={0.075}>Нажмите <b>Create</b>, чтобы завершить создание нового проекта</Line></P>
                <P $top={13}>
                  <Line $ls={0.135}>Если Вы захотите изменить введенные данные, Вы всегда сможете вернуться и исправить эти поля. Чтобы показать</Line>
                  <Line $ls={0.095}>возможности системы, мы будем рассматривать проект, исследующий зависимости в признаках стран европейского континента.</Line>
                </P>
              </Article>
              <Form>
                <FormTitle>Create Project</FormTitle>
                <Lead>A <b>project</b> is a group of people working together on a common set of tasks.</Lead>
                <Row $h={49}><Label>Name*</Label><Cell><Input defaultValue="Europe Countries" /></Cell></Row>
                <Row $h={79}>
                  <Label>Slug*</Label>
                  <Cell><Input defaultValue="EuCountries" /><Help>a short version of the name consisting only of letters, numbers,<br />underscores and hyphens.</Help></Cell>
                </Row>
                <Row $h={221}>
                  <Label>Description*</Label>
                  <Cell>
                    <Textarea defaultValue={"This project reveals relations\nbetween attributes of countries."} />
                    <Grip width="11" height="11" viewBox="0 0 11 11" fill="#aaa"><path d="M8 0h2v2H8zM4 4h2v2H4zM8 4h2v2H8zM0 8h2v2H0zM4 8h2v2H4zM8 8h2v2H8z" /></Grip>
                  </Cell>
                </Row>
                <Submit type="button">create</Submit>
              </Form>
              <Footer>© 2011 &lt;Higher School of Economics, Moscow&gt; - <a>About</a> - <a>Terms of Service</a> - <a>Privacy Policy</a> - <a>DMCA Notice</a></Footer>
            </Page>
            <ScrollBar>
              <ScrollEnd><svg width="6" height="4" viewBox="0 0 6 4"><path d="M0 4h6L3 0z" fill="#999" /></svg></ScrollEnd>
              <Thumb><svg width="5" height="8" viewBox="0 0 5 8"><path d="M0 .5h5M0 3.500h5M0 6.500h5" stroke="#999" /></svg></Thumb>
              <Spacer />
              <ScrollEnd $bottom><svg width="6" height="4" viewBox="0 0 6 4"><path d="M0 0h6L3 4z" fill="#666" /></svg></ScrollEnd>
            </ScrollBar>
          </View>
        </Browser>
      </Desktop>
    </Screen>
  );
}
